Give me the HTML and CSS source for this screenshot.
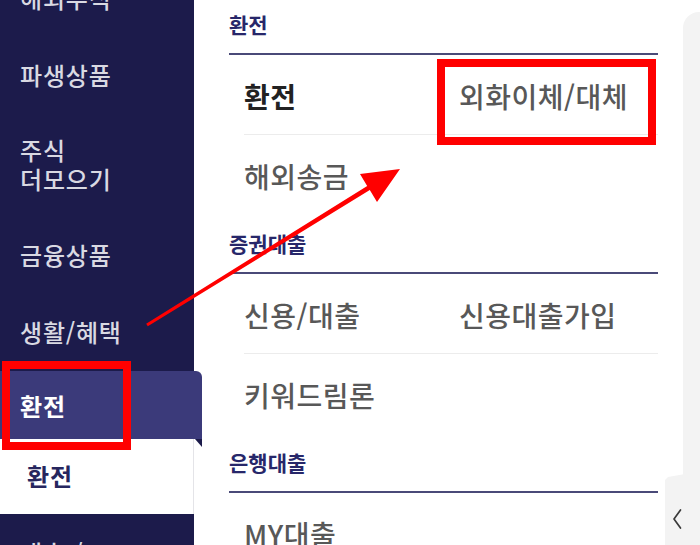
FILE: index.html
```html
<!DOCTYPE html>
<html lang="ko">
<head>
<meta charset="utf-8">
<title>전체메뉴 - 환전</title>
<link rel="stylesheet" href="styles.css">
</head>
<body>
<div class="screen">
  <nav class="sidebar">
    <ul class="menu">
      <li class="menu-item">해외주식</li>
      <li class="menu-item">파생상품</li>
      <li class="menu-item menu-item--double">주식<br>더모으기</li>
      <li class="menu-item">금융상품</li>
      <li class="menu-item">생활/혜택</li>
      <li class="menu-item menu-item--active">환전</li>
      <li class="submenu">환전</li>
      <li class="menu-item">대출 /</li>
    </ul>
  </nav>

  <main class="content">
    <section class="group">
      <h2 class="group-title">환전</h2>
      <ul class="rows">
        <li class="row"><span class="cell cell--current">환전</span><span class="cell">외화이체/대체</span></li>
        <li class="row"><span class="cell">해외송금</span></li>
      </ul>
    </section>
    <section class="group">
      <h2 class="group-title">증권대출</h2>
      <ul class="rows">
        <li class="row"><span class="cell">신용/대출</span><span class="cell">신용대출가입</span></li>
        <li class="row"><span class="cell">키워드림론</span></li>
      </ul>
    </section>
    <section class="group">
      <h2 class="group-title">은행대출</h2>
      <ul class="rows">
        <li class="row"><span class="cell">MY대출</span></li>
      </ul>
    </section>
  </main>

  <aside class="side-panel"></aside>

  <div class="side-tab">
    <svg class="side-tab-icon" width="10" height="22" viewBox="0 0 10 22" aria-hidden="true">
      <path d="M8.5 2 L2 11 L8.5 20" fill="none" stroke="#3a3a3a" stroke-width="1.7" stroke-linecap="round" stroke-linejoin="round"/>
    </svg>
  </div>

  <div class="mark mark--menu"></div>
  <div class="mark mark--target"></div>
  <svg class="arrow" width="700" height="545" viewBox="0 0 700 545" aria-hidden="true">
    <polygon fill="#ff0000" points="147.8,326.3 369.8,190.1 377,202 400,169 360,174 367.2,185.9 146.2,323.7"/>
  </svg>
</div>
</body>
</html>
```
FILE: styles.css
```css
* {
  box-sizing: border-box;
}

html, body {
  margin: 0;
  padding: 0;
  background: #ffffff;
}

body {
  font-family: "Noto Sans CJK KR", "Noto Sans", sans-serif;
  width: 700px;
  height: 545px;
  overflow: hidden;
}

.screen {
  position: relative;
  display: flex;
  width: 700px;
  height: 545px;
  overflow: hidden;
}

/* ---------- sidebar ---------- */
.sidebar {
  flex: 0 0 194px;
  width: 194px;
  min-width: 0;
  background: #1c1b4b;
  position: relative;
  z-index: 2;
}

.menu {
  list-style: none;
  margin: -41px 0 0;
  padding: 0;
}

.menu-item {
  height: 77px;
  padding: 24px 0 0 20px;
  font-size: 24px;
  line-height: 29px;
  font-weight: 500;
  color: #d9d9e2;
  letter-spacing: 0.8px;
  white-space: nowrap;
}

.menu-item--double {
  height: 103px;
  padding-top: 22px;
}

.menu-item--active {
  position: relative;
  width: 202px;
  height: 68px;
  margin-top: 1px;
  padding-top: 20px;
  background: #3b3a7a;
  border-top-right-radius: 6px;
  color: #ffffff;
  font-weight: 700;
}

.menu-item--active::after {
  content: "";
  position: absolute;
  right: 0;
  bottom: -8px;
  border-top: 8px solid #1c1b4b;
  border-left: 7px solid transparent;
}

.submenu {
  height: 75px;
  padding: 22px 0 0 27px;
  background: #ffffff;
  border-right: 1px solid #e4e4e8;
  font-size: 24px;
  line-height: 29px;
  font-weight: 700;
  letter-spacing: 0.8px;
  color: #26265e;
}

/* ---------- content ---------- */
.content {
  flex: 1 1 auto;
  min-width: 0;
  padding: 0 25px 0 35px;
  background: #ffffff;
}

.group:first-child {
  margin-top: -5px;
}

.group-title {
  margin: 0;
  height: 60px;
  padding-top: 14px;
  border-bottom: 2px solid #4a4a78;
  font-size: 21px;
  line-height: 30px;
  font-weight: 700;
  color: #27276a;
}

.rows {
  list-style: none;
  margin: 0;
  padding: 0 0 0 15px;
}

.row {
  display: grid;
  grid-template-columns: 215px 1fr;
  align-items: center;
  height: 79px;
  padding-top: 2px;
}

.row + .row {
  border-top: 1px solid #ececec;
  height: 80px;
}

.cell {
  font-size: 28px;
  line-height: 38px;
  font-weight: 500;
  color: #585858;
  letter-spacing: 0.5px;
  white-space: nowrap;
}

.cell--current {
  font-weight: 700;
  color: #222222;
}

/* ---------- right panel ---------- */
.side-panel {
  flex: 0 0 17px;
  margin-top: 12px;
  background: #f3f3f3;
  border-top-left-radius: 16px;
}

.side-tab {
  position: absolute;
  left: 665px;
  top: 474px;
  width: 20px;
  height: 71px;
  background: #f3f3f3;
  clip-path: polygon(0 6px, 3px 3px, 100% 0, 100% 100%, 0 100%);
  display: flex;
  justify-content: center;
  padding-top: 34px;
  padding-left: 4px;
}

.side-tab-icon {
  display: block;
}

/* ---------- annotations ---------- */
.mark {
  position: absolute;
  border: 8px solid #ff0000;
  z-index: 5;
}

.mark--menu {
  left: 2px;
  top: 361px;
  width: 129px;
  height: 89px;
}

.mark--target {
  left: 437px;
  top: 59px;
  width: 219px;
  height: 86px;
}

.arrow {
  position: absolute;
  left: 0;
  top: 0;
  z-index: 6;
}
```
